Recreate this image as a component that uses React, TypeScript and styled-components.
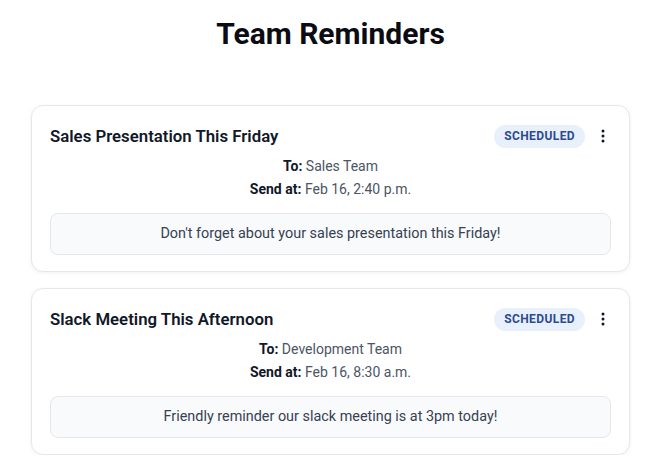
import styled, { createGlobalStyle } from "styled-components";

const GlobalStyle = createGlobalStyle`
  body {
    margin: 0;
    background: #ffffff;
    font-family: Roboto, "Liberation Sans", sans-serif;
    color: #111827;
  }
`;

const Page = styled.div`
  padding: 15px 28px 0 31px;
`;

const Heading = styled.h1`
  margin: 0 0 52px;
  text-align: center;
  font-size: 30px;
  font-weight: 700;
  line-height: 38px;
  color: #0b0b12;
`;

const List = styled.div`
  display: flex;
  flex-direction: column;
  gap: 16px;
`;

const Card = styled.div`
  border: 1px solid #e5e7eb;
  border-radius: 12px;
  box-shadow: 0 1px 4px rgba(0, 0, 0, 0.06);
  padding: 18px 18px 16px;
  background: #fff;
`;

const Header = styled.div`
  display: flex;
  align-items: center;
  height: 24px;
`;

const Title = styled.h2`
  flex: 1;
  margin: 0;
  font-size: 16.8px;
  font-weight: 600;
  color: #111827;
`;

const Badge = styled.span`
  background: #e8f0fc;
  color: #2d4b8e;
  font-size: 12px;
  font-weight: 700;
  letter-spacing: 0.4px;
  padding: 4px 10px;
  border-radius: 12px;
  line-height: 15px;
`;

const MenuButton = styled.button`
  border: none;
  background: none;
  padding: 0;
  margin-left: 10px;
  width: 16px;
  height: 20px;
  display: flex;
  align-items: center;
  justify-content: center;
  cursor: pointer;
`;

const Meta = styled.div`
  margin-top: 7px;
  text-align: center;
  font-size: 14px;
  line-height: 23px;
  color: #4b5563;

  b {
    color: #111827;
    font-weight: 700;
  }
`;

const Message = styled.div`
  margin-top: 12px;
  background: #f8fafc;
  border: 1px solid #e5e7eb;
  border-radius: 8px;
  padding: 11px 16px;
  text-align: center;
  font-size: 14.4px;
  line-height: 18px;
  color: #374151;
`;

const reminders = [
  {
    title: "Sales Presentation This Friday",
    to: "Sales Team",
    sendAt: "Feb 16, 2:40 p.m.",
    message: "Don't forget about your sales presentation this Friday!",
  },
  {
    title: "Slack Meeting This Afternoon",
    to: "Development Team",
    sendAt: "Feb 16, 8:30 a.m.",
    message: "Friendly reminder our slack meeting is at 3pm today!",
  },
];

function Dots() {
  return (
    <svg width="4" height="14" viewBox="0 0 4 14">
      <circle cx="2" cy="2" r="1.5" fill="#111827" />
      <circle cx="2" cy="7" r="1.5" fill="#111827" />
      <circle cx="2" cy="12" r="1.5" fill="#111827" />
    </svg>
  );
}

export default function App() {
  return (
    <Page>
      <GlobalStyle />
      <Heading>Team Reminders</Heading>
      <List>
        {reminders.map((r) => (
          <Card key={r.title}>
            <Header>
              <Title>{r.title}</Title>
              <Badge>SCHEDULED</Badge>
              <MenuButton>
                <Dots />
              </MenuButton>
            </Header>
            <Meta>
              <div>
                <b>To:</b> {r.to}
              </div>
              <div>
                <b>Send at:</b> {r.sendAt}
              </div>
            </Meta>
            <Message>{r.message}</Message>
          </Card>
        ))}
      </List>
    </Page>
  );
}
